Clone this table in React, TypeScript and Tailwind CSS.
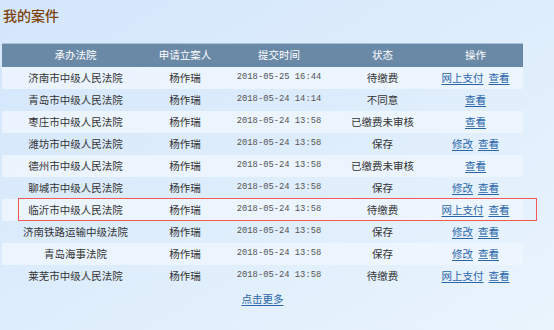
import React from 'react';

interface CaseRow {
  court: string;
  applicant: string;
  time: string;
  status: string;
  actions: string[];
}

const rows: CaseRow[] = [
  { court: '济南市中级人民法院', applicant: '杨作瑞', time: '2018-05-25 16:44', status: '待缴费', actions: ['网上支付', '查看'] },
  { court: '青岛市中级人民法院', applicant: '杨作瑞', time: '2018-05-24 14:14', status: '不同意', actions: ['查看'] },
  { court: '枣庄市中级人民法院', applicant: '杨作瑞', time: '2018-05-24 13:58', status: '已缴费未审核', actions: ['查看'] },
  { court: '潍坊市中级人民法院', applicant: '杨作瑞', time: '2018-05-24 13:58', status: '保存', actions: ['修改', '查看'] },
  { court: '德州市中级人民法院', applicant: '杨作瑞', time: '2018-05-24 13:58', status: '已缴费未审核', actions: ['查看'] },
  { court: '聊城市中级人民法院', applicant: '杨作瑞', time: '2018-05-24 13:58', status: '保存', actions: ['修改', '查看'] },
  { court: '临沂市中级人民法院', applicant: '杨作瑞', time: '2018-05-24 13:58', status: '待缴费', actions: ['网上支付', '查看'] },
  { court: '济南铁路运输中级法院', applicant: '杨作瑞', time: '2018-05-24 13:58', status: '保存', actions: ['修改', '查看'] },
  { court: '青岛海事法院', applicant: '杨作瑞', time: '2018-05-24 13:58', status: '保存', actions: ['修改', '查看'] },
  { court: '莱芜市中级人民法院', applicant: '杨作瑞', time: '2018-05-24 13:58', status: '待缴费', actions: ['网上支付', '查看'] },
];

const cjk = "font-['Noto_Sans_CJK_SC','Noto_Sans',sans-serif]";

const App: React.FC = () => {
  return (
    <div className={`w-[554px] h-[330px] overflow-hidden bg-gradient-to-br from-[#d3e6fb] via-[#deedfc] to-[#eaf4fd] ${cjk} text-[#333]`}>
      <h2 className="pl-[3px] pt-[5px] h-[43px] text-[14px] leading-[20px] font-medium text-[#7e420c]">我的案件</h2>

      <div className="relative ml-[2px] w-[521px]">
        <table className="w-full table-fixed border-collapse text-[10.5px]">
          <colgroup>
            <col className="w-[147px]" />
            <col className="w-[72px]" />
            <col className="w-[116px]" />
            <col className="w-[91px]" />
            <col className="w-[95px]" />
          </colgroup>
          <thead>
            <tr className="h-[23px] bg-[#6a89a7] text-white border-t border-[#a9c2db]">
              <th className="font-normal">承办法院</th>
              <th className="font-normal">申请立案人</th>
              <th className="font-normal">提交时间</th>
              <th className="font-normal">状态</th>
              <th className="font-normal">操作</th>
            </tr>
          </thead>
          <tbody>
            {rows.map((r, i) => (
              <tr key={i} className={`h-[22px] ${i % 2 === 0 ? 'bg-[#edf5fe]/90' : ''}`}>
                <td className="text-center whitespace-nowrap">{r.court}</td>
                <td className="text-center">{r.applicant}</td>
                <td className="text-center font-['Liberation_Mono',monospace] text-[8.8px] text-[#555]">{r.time}</td>
                <td className="text-center">{r.status}</td>
                <td className="text-center">
                  <span className="inline-flex gap-[5px]">
                    {r.actions.map((a) => (
                      <a key={a} href="#" className="text-[#2a65a8] underline underline-offset-2">
                        {a}
                      </a>
                    ))}
                  </span>
                </td>
              </tr>
            ))}
          </tbody>
        </table>

        {/* highlight around the 临沂 row */}
        <div className="absolute left-[16px] top-[155px] w-[519px] h-[23px] border border-[#f25a5a] pointer-events-none" />

        <div className="text-center pt-[4px] text-[10.5px]">
          <a href="#" className="text-[#2a65a8] underline underline-offset-2">点击更多</a>
        </div>
      </div>
    </div>
  );
};

export default App;
